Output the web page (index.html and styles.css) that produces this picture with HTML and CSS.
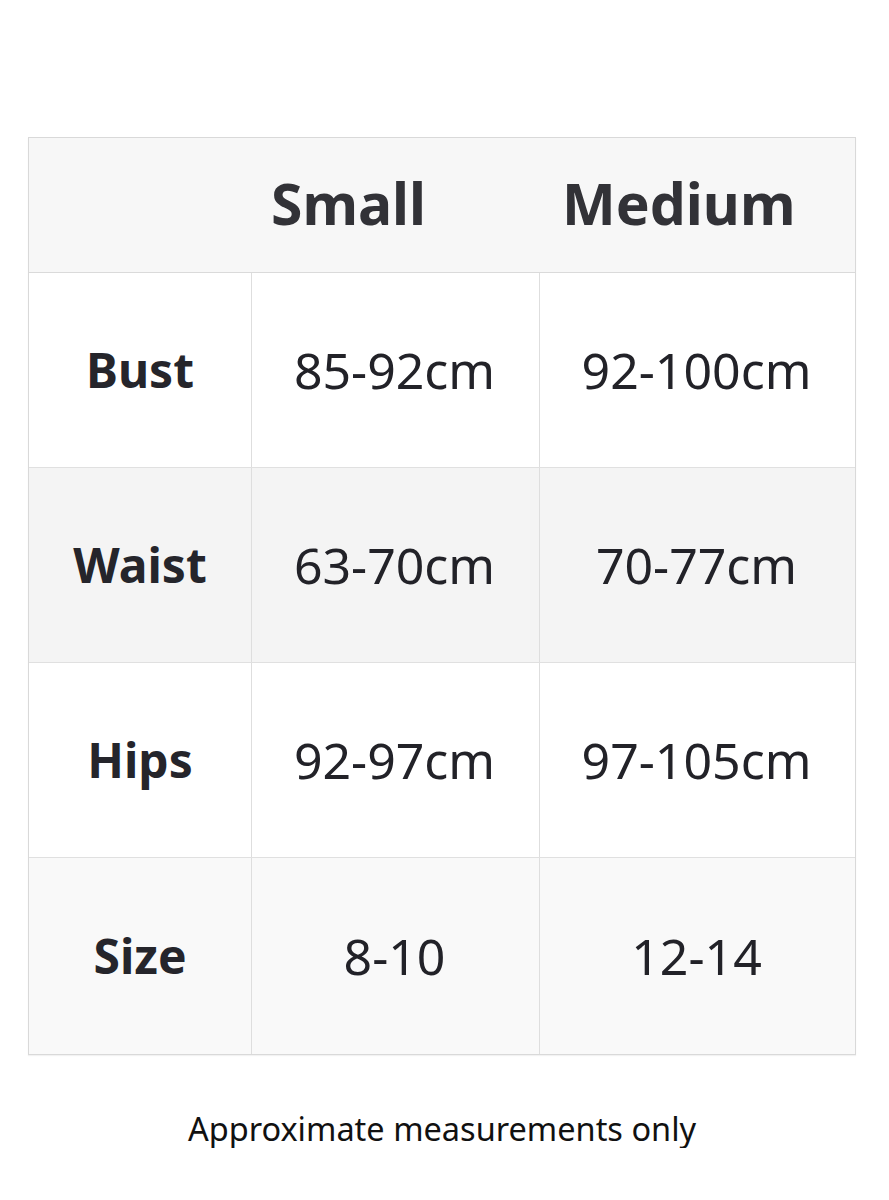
FILE: index.html
```html
<!DOCTYPE html>
<html lang="en">
<head>
<meta charset="utf-8">
<title>Size chart</title>
<link rel="stylesheet" href="styles.css">
</head>
<body>
<main class="page">
  <div class="chart">
    <div class="head-row">
      <div class="head-cell head-blank"></div>
      <div class="head-cell head-small">Small</div>
      <div class="head-cell head-medium">Medium</div>
    </div>
    <div class="row row-white">
      <div class="cell label">Bust</div>
      <div class="cell value">85-92cm</div>
      <div class="cell value">92-100cm</div>
    </div>
    <div class="row row-grey">
      <div class="cell label">Waist</div>
      <div class="cell value">63-70cm</div>
      <div class="cell value">70-77cm</div>
    </div>
    <div class="row row-white">
      <div class="cell label">Hips</div>
      <div class="cell value">92-97cm</div>
      <div class="cell value">97-105cm</div>
    </div>
    <div class="row row-light">
      <div class="cell label">Size</div>
      <div class="cell value">8-10</div>
      <div class="cell value">12-14</div>
    </div>
  </div>
  <p class="note">Approximate measurements only</p>
</main>
</body>
</html>
```

FILE: styles.css
```css
html, body {
  margin: 0;
  padding: 0;
  background: #ffffff;
}

body {
  font-family: "Noto Sans", "Open Sans", sans-serif;
  color: #26262b;
}

.page {
  padding: 137px 33px 0 28px;
  display: flex;
  flex-direction: column;
}

.chart {
  border: 1px solid #d9d9d9;
  box-shadow: 0 1px 1px rgba(0,0,0,0.05);
}

.head-row {
  display: grid;
  grid-template-columns: 222px 290px 1fr;
  height: 134px;
  align-items: center;
  background: #f7f7f7;
  border-bottom: 1px solid #dadada;
}

.head-cell {
  font-weight: 700;
  font-size: 57px;
  color: #323237;
  line-height: 1;
  padding-bottom: 4px;
}

.head-small {
  padding-left: 20px;
}

.head-medium {
  padding-left: 21px;
}

.row {
  display: grid;
  grid-template-columns: 222px 288px 1fr;
  height: 194px;
  border-bottom: 1px solid #e0e0e0;
}

.row:last-child {
  border-bottom: none;
  height: 196px;
}

.row-white { background: #ffffff; }
.row-grey { background: #f4f4f4; }
.row-light { background: #f9f9f9; }

.cell {
  display: flex;
  align-items: center;
  justify-content: center;
  border-left: 1px solid #dedede;
  line-height: 1;
}

.cell:first-child {
  border-left: none;
}

.label {
  font-weight: 700;
  font-size: 48px;
  color: #25252b;
}

.value {
  font-weight: 400;
  font-size: 50px;
  color: #222228;
  padding-right: 2px;
}

.note {
  margin: 54px 0 0 0;
  text-align: center;
  font-size: 32.5px;
  color: #111111;
  font-weight: 400;
  line-height: 1.2;
}
```
